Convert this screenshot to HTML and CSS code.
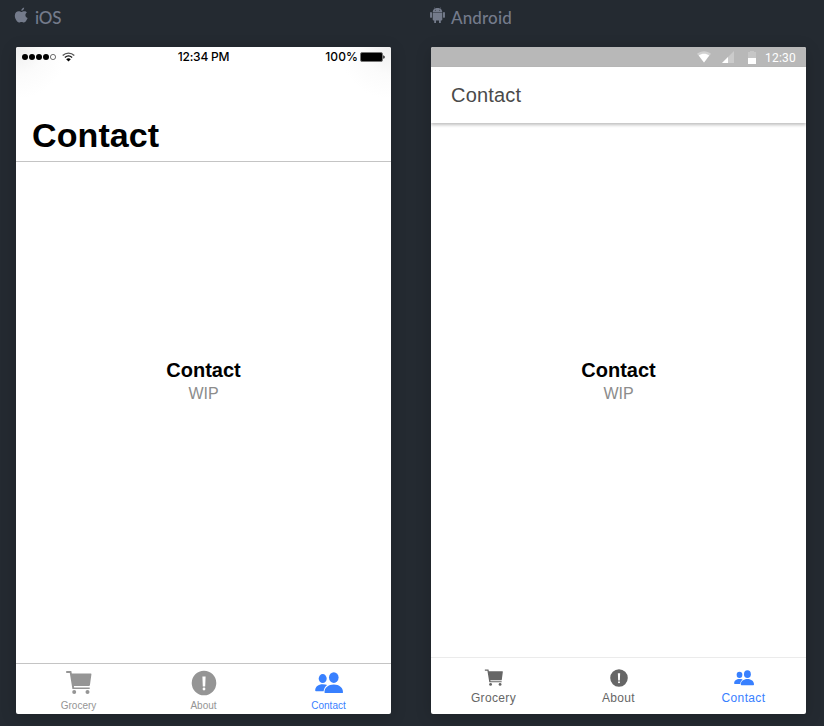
FILE: index.html
```html
<!DOCTYPE html>
<html lang="en">
<head>
<meta charset="utf-8">
<title>Contact</title>
<link rel="stylesheet" href="styles.css">
</head>
<body>
<svg class="defs" aria-hidden="true">
  <symbol id="cart" viewBox="0 0 28 28">
    <path d="M1.2 2h5.1l.5 2.5h18.9c.5 0 .8.4.7.9L24.9 16.3c-.1.5-.4.8-1 .8H8.9l.2 1.4h15.6V20H7.4L4.8 3.9H1.2z"/>
    <circle cx="9.2" cy="23" r="2"/><circle cx="22.5" cy="23" r="2"/>
  </symbol>
  <symbol id="alert" viewBox="0 0 28 28">
    <path fill-rule="evenodd" d="M14 1.7a12.3 12.3 0 1 0 0 24.6 12.3 12.3 0 0 0 0-24.6zm-1.6 5.7h3.2l-.4 10.2h-2.4zM14 18.6a1.4 1.4 0 1 1 0 2.8 1.4 1.4 0 0 1 0-2.8z"/>
  </symbol>
  <symbol id="people" viewBox="0 0 28 28">
    <ellipse cx="18.8" cy="8.6" rx="4.8" ry="5.3"/>
    <ellipse cx="7.7" cy="9.6" rx="4" ry="4.5"/>
    <path d="M9.5 23.2c0-4.7 3.8-7.8 9.3-7.8s9.2 3.1 9.2 7.8c0 .6-.4.9-1 .9H10.5c-.6 0-1-.3-1-.9zM12.1 16c-1.2-.5-2.7-.7-4.4-.7-4.4 0-7.5 2.4-7.5 6.2 0 .5.3.8.8.8h7.6c.3-2.5 1.5-4.7 3.5-6.3z"/>
  </symbol>
</svg>
<main class="preview">
  <section class="device ios">
    <h2 class="platform">
      <svg class="platform-icon" viewBox="0 0 14 16"><path d="M9.5.5c.1 1.6-1.1 3-2.7 3.1C6.7 2.1 7.9.8 9.5.5zM12.1 5.1c-2.1 1.3-1.8 4.2.6 5.2-.5 1.5-1.8 4.2-3.4 4.2-.9 0-1.2-.5-2.3-.5s-1.5.5-2.3.5C2.8 14.5.7 11 .7 8.3c0-3 1.9-4.3 3.6-4.3 1.1 0 1.9.6 2.6.6.6 0 1.6-.7 2.9-.7.9 0 1.8.5 2.3 1.2z"/></svg>
      <span>iOS</span>
    </h2>
    <div class="phone">
      <header class="ios-header">
        <div class="ios-status">
          <div class="carrier">
            <svg width="35" height="8" viewBox="0 0 35 8"><circle cx="3" cy="4" r="3"/><circle cx="10" cy="4" r="3"/><circle cx="17" cy="4" r="3"/><circle cx="24" cy="4" r="3"/><circle cx="31" cy="4" r="2.6" fill="none" stroke="#333" stroke-width=".7"/></svg>
            <svg class="ios-wifi" width="13" height="10" viewBox="0 0 13 10"><g fill="none" stroke="#111" stroke-width="1.4"><path d="M.7 3.4C4 .3 9 .3 12.3 3.4" stroke="#555"/><path d="M2.9 5.5c2.1-1.9 5.1-1.9 7.2 0"/></g><path d="M6.5 9.5 4.2 7.2c1.3-1.2 3.3-1.2 4.6 0z"/></svg>
          </div>
          <span class="time">12:34 PM</span>
          <div class="power"><span>100%</span>
            <svg width="25" height="10" viewBox="0 0 25 10"><rect x=".5" y=".5" width="22" height="9" rx="1.5" fill="#000" stroke="#777"/><path d="M23.3 3.2q1.4.4 1.4 1.8t-1.4 1.8z"/></svg>
          </div>
        </div>
        <h1>Contact</h1>
      </header>
      <div class="content"><strong>Contact</strong><span>WIP</span></div>
      <nav class="tabs">
        <a class="tab"><svg><use href="#cart"/></svg><span>Grocery</span></a>
        <a class="tab"><svg><use href="#alert"/></svg><span>About</span></a>
        <a class="tab active"><svg><use href="#people"/></svg><span>Contact</span></a>
      </nav>
    </div>
  </section>
  <section class="device android">
    <h2 class="platform">
      <svg class="platform-icon" viewBox="0 0 14 16"><path d="M2.5 4.7C2.7 3 3.4 2 4.5 1.4L3.9.5l.3-.2.7 1c1.3-.5 2.9-.5 4.2 0l.7-1 .3.2-.6.9c1.1.6 1.8 1.6 2 3.3zM2.5 5.2h9V12c0 .5-.3.8-.8.8h-.6v2.3H8.4v-2.3H5.6v2.3H3.9v-2.3h-.6c-.5 0-.8-.3-.8-.8z"/><rect y="4.7" width="1.8" height="5.5" rx=".9"/><rect x="12.2" y="4.7" width="1.8" height="5.5" rx=".9"/><g fill="#242a31"><circle cx="5" cy="3.1" r=".45"/><circle cx="9" cy="3.1" r=".45"/></g></svg>
      <span>Android</span>
    </h2>
    <div class="phone">
      <div class="android-status">
        <svg class="md-wifi" width="14" height="12" viewBox="0 0 14 12"><path d="M0 2.7C4-.7 10-.7 14 2.7L7 11.5z" opacity=".35"/><path d="M1.8 4.5C4.7 2.2 9.3 2.2 12.2 4.5L7 11.5z"/></svg>
        <svg class="md-signal" width="12" height="12" viewBox="0 0 12 12"><path d="M12 0v12H0z" opacity=".28"/><path d="M6 6v6H0z"/></svg>
        <svg class="md-battery" width="8" height="13" viewBox="0 0 8 13"><path d="M0 1h2V0h4v1h2v6H0z" opacity=".2"/><path d="M0 7h8v6H0z"/></svg>
        <span>12:30</span>
      </div>
      <header class="toolbar">Contact</header>
      <div class="content"><strong>Contact</strong><span>WIP</span></div>
      <nav class="tabs">
        <a class="tab"><svg><use href="#cart"/></svg><span>Grocery</span></a>
        <a class="tab"><svg><use href="#alert"/></svg><span>About</span></a>
        <a class="tab active"><svg><use href="#people"/></svg><span>Contact</span></a>
      </nav>
    </div>
  </section>
</main>
</body>
</html>
```
FILE: styles.css
```css
* { box-sizing: border-box; }
body {
  margin: 0;
  height: 726px;
  overflow: hidden;
  background: #242a31;
  font-family: "Liberation Sans", Arial, sans-serif;
}
.defs { display: none; }
svg { display: block; fill: currentColor; flex: none; }
.preview { display: flex; gap: 40px; padding: 0 16px; }
.device { width: 375px; flex: none; }
.platform {
  height: 47px;
  margin: 0;
  padding-top: 7px;
  display: flex;
  align-items: flex-start;
  color: #747b8b;
  font: 500 17px/21px Lato, sans-serif;
}
.ios .platform span { letter-spacing: -.2px; }
.android .platform span { letter-spacing: .15px; }
.platform-icon { width: 15px; height: 17px; margin: 0 6px 0 -1px; }
.ios .platform-icon { margin: 0 6px 0 -2px; }
.phone {
  height: 667px;
  display: flex;
  flex-direction: column;
  overflow: hidden;
  border-radius: 2px;
  background: #fff;
  box-shadow: 0 3px 16px rgba(0, 0, 0, .18);
}
.ios-header {
  height: 115px;
  border-bottom: 1px solid #c4c4c4;
  background:
    radial-gradient(circle at 0 0, #eee 0, #fbfbfb 28px, #fff 52px, transparent 53px),
    radial-gradient(circle at 100% 0, #eee 0, #fbfbfb 28px, #fff 52px, transparent 53px);
}
.ios-status {
  height: 20px;
  display: grid;
  grid-template-columns: 1fr auto 1fr;
  align-items: center;
  padding: 0 6px;
  font: 500 12px/20px Inter, sans-serif;
  color: #000;
}
.time { letter-spacing: -.25px; }
.carrier, .power { display: flex; align-items: center; }
.ios-wifi { margin-left: 5px; }
.power { justify-content: flex-end; gap: 2px; letter-spacing: .1px; }
.ios-header h1 {
  margin: 48px 0 0 16px;
  font-size: 34px;
  line-height: 40px;
  letter-spacing: .1px;
}
.content {
  flex: 1;
  display: flex;
  flex-direction: column;
  align-items: center;
}
.content strong { font-size: 20px; line-height: 24px; color: #000; }
.content span { font-size: 16px; line-height: 24px; color: #8c8c8c; }
.ios .content { padding-top: 196px; }
.android .content { padding-top: 235px; }
.tabs { display: grid; grid-template-columns: repeat(3, 1fr); }
.tab {
  display: flex;
  flex-direction: column;
  align-items: center;
}
.ios .tabs { height: 51px; border-top: 1px solid #c4c4c4; }
.ios .tab { padding-top: 5px; color: #959595; font-size: 10px; line-height: 12px; }
.ios .tab svg { width: 28px; height: 28px; margin-bottom: 3px; }
.android .tabs { height: 57px; border-top: 1px solid #ebebeb; }
.android .tab { padding-top: 10px; color: #666; font-size: 12px; line-height: 14px; letter-spacing: .36px; }
.android .tab svg { width: 20px; height: 20px; margin-bottom: 3px; }
.ios .tab.active, .android .tab.active { color: #3880ff; }
.android-status {
  height: 20px;
  display: flex;
  justify-content: flex-end;
  align-items: center;
  padding-right: 10px;
  background: #b8b8b8;
  color: #fff;
  font: 12px/20px Roboto, sans-serif;
}
.android-status span { letter-spacing: .2px; padding-top: 2px; }
.md-wifi { margin-right: 11px; }
.md-signal { margin-right: 14px; }
.md-battery { margin-right: 9px; }
.toolbar {
  height: 56px;
  padding-left: 20px;
  font-size: 20px;
  line-height: 56px;
  letter-spacing: .2px;
  color: #4a4a4a;
  box-shadow: 0 2px 3px rgba(0, 0, 0, .25);
}
```
